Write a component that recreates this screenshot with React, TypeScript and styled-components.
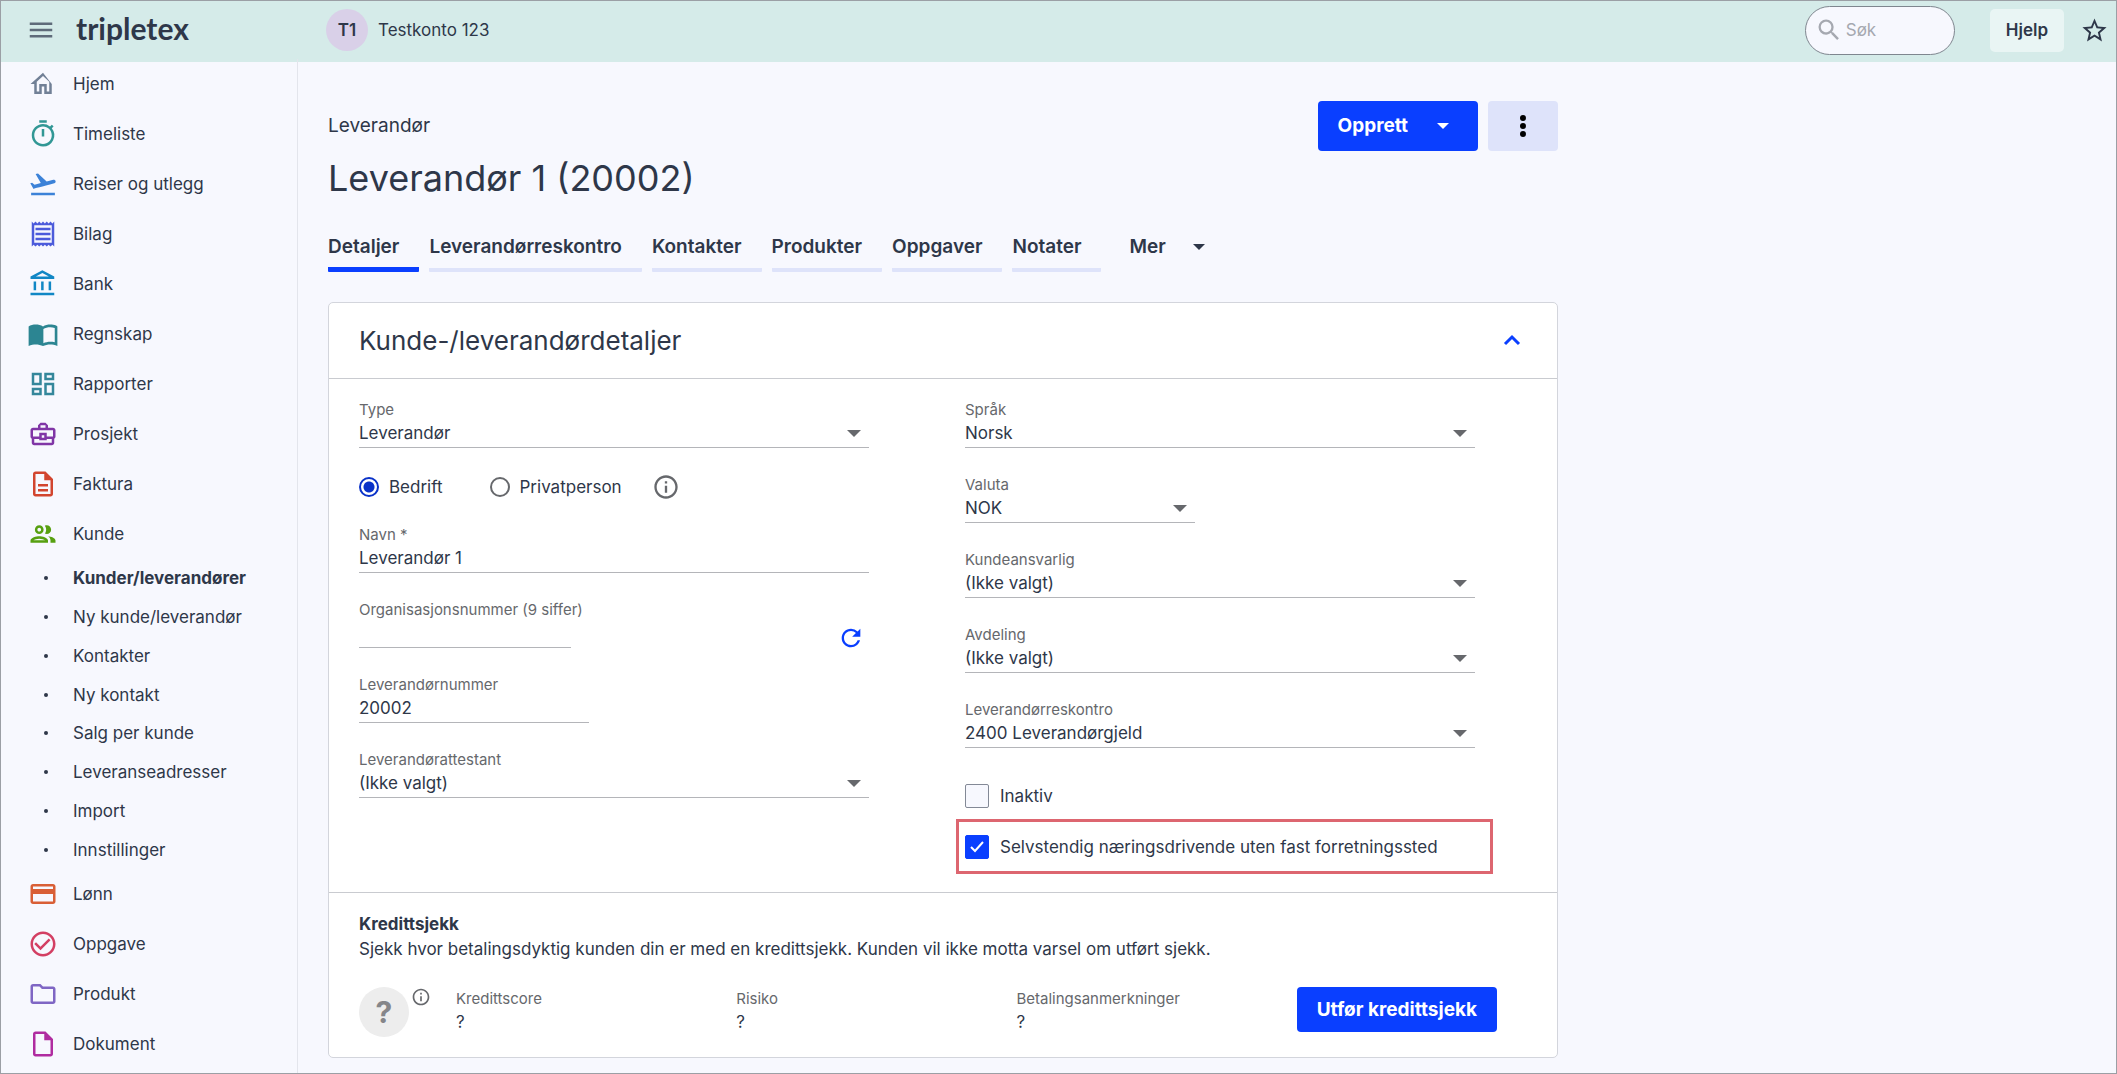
import React, { ReactNode, useId } from "react";
import styled, { createGlobalStyle } from "styled-components";
import { IconType } from "react-icons";
import {
  MdCheckCircleOutline,
  MdCreditCard,
  MdFlightTakeoff,
  MdInfoOutline,
  MdMenu,
  MdOutlineAccountBalance,
  MdOutlineBusinessCenter,
  MdOutlineDashboard,
  MdOutlineDescription,
  MdOutlineFolder,
  MdOutlineInsertDriveFile,
  MdOutlineReceipt,
  MdOutlineTimer,
  MdRefresh,
  MdSearch,
  MdStarBorder,
} from "react-icons/md";

const color = {
  ink: "#2e3749",
  muted: "#66686c",
  page: "#f7f8fe",
  header: "#d5ebe9",
  blue: "#0a3fff",
  pale: "#dee3fa",
  line: "#c9cbd0",
  rule: "#b4b5b9",
  frame: "#9b9fa5",
};

const GlobalStyle = createGlobalStyle`
  * { box-sizing: border-box; }
  body {
    margin: 0;
    background: ${color.page};
    color: ${color.ink};
    font: 400 17px/24px Inter, Roboto, "Open Sans", sans-serif;
  }
  button, input, select { font: inherit; color: inherit; margin: 0; }
  button { cursor: pointer; border: 0; background: none; padding: 0; }
  a { color: inherit; text-decoration: none; }
  svg { display: block; flex: none; }
`;

const Page = styled.div`
  display: flex;
  flex-direction: column;
  height: 100vh;
  border: 1px solid ${color.frame};
  overflow: hidden;
`;

const Header = styled.header`
  display: flex;
  align-items: center;
  flex: none;
  height: 61px;
  padding: 0 7px 3px 25px;
  background: ${color.header};
`;

const IconButton = styled.button<{ $color?: string }>`
  display: grid;
  place-items: center;
  color: ${(p) => p.$color ?? color.ink};
`;

const RefreshButton = styled(IconButton)`
  height: 24px;
`;

const Logo = styled.a`
  width: 270px;
  padding: 0 0 4px 20px;
  font: 700 30px/36px Lato, sans-serif;
`;

const Account = styled.div`
  display: flex;
  align-items: center;
  gap: 10px;
`;

const Avatar = styled.span`
  display: grid;
  place-items: center;
  width: 42px;
  height: 42px;
  border-radius: 50%;
  background: #d9d0e8;
  font-weight: 600;
`;

const Tools = styled.div`
  display: flex;
  align-items: center;
  margin-left: auto;
`;

const Search = styled.label`
  display: flex;
  align-items: center;
  gap: 3px;
  width: 150px;
  height: 49px;
  margin-right: 35px;
  padding: 0 12px 0 9px;
  border: 1px solid #7f868f;
  border-radius: 25px;
  background: ${color.page};
  color: #a5a8b0;
  input {
    width: 100%;
    min-width: 0;
    border: 0;
    padding: 0;
    outline: 0;
    background: none;
  }
  input::placeholder { color: #a5a8b0; opacity: 1; }
`;

const HelpButton = styled.button`
  height: 43px;
  margin-right: 16px;
  padding: 0 16px;
  border-radius: 5px;
  background: #e9f5f4;
  font-weight: 600;
`;

const Body = styled.div`
  display: flex;
  flex: 1;
  min-height: 0;
`;

const Sidebar = styled.nav`
  flex: none;
  width: 297px;
  border-right: 1px solid #e3e5ec;
  margin-top: -3px;
`;

const NavList = styled.ul`
  margin: 0;
  padding: 0;
  list-style: none;
`;

const NavLink = styled.a`
  display: flex;
  align-items: center;
  gap: 15px;
  height: 50px;
  padding-left: 27px;
`;

const SubList = styled(NavList)`
  display: grid;
  grid-auto-rows: 1fr;
  height: 310px;
`;

const SubLink = styled.a<{ $active?: boolean }>`
  display: flex;
  align-items: center;
  height: 100%;
  padding-left: 43px;
  font-weight: ${(p) => (p.$active ? 700 : 400)};
  &::before {
    content: "";
    width: 4px;
    height: 4px;
    margin-right: 25px;
    border-radius: 50%;
    background: ${color.ink};
  }
`;

const Main = styled.main`
  flex: 1;
  min-width: 0;
  padding: 39px 30px 0;
`;

const Content = styled.div`
  max-width: 1230px;
`;

const TitleRow = styled.div`
  display: flex;
  justify-content: space-between;
  align-items: flex-start;
`;

const Titles = styled.div`
  padding-top: 13px;
`;

const Crumb = styled.p`
  margin: 0 0 16px;
  font-size: 19px;
`;

const Title = styled.h1`
  margin: 0;
  font-size: 36px;
  font-weight: 400;
  line-height: 48px;
`;

const Actions = styled.div`
  display: flex;
  gap: 10px;
`;

const PrimaryButton = styled.button<{ $tall?: boolean }>`
  display: flex;
  align-items: center;
  gap: 29px;
  height: ${(p) => (p.$tall ? 50 : 45)}px;
  padding: 0 ${(p) => (p.$tall ? 29 : 20)}px 0 20px;
  border-radius: 4px;
  background: ${color.blue};
  color: #fff;
  font-size: 19px;
  font-weight: 700;
  white-space: nowrap;
`;

const MoreButton = styled(IconButton)`
  width: 70px;
  height: 50px;
  border-radius: 4px;
  background: ${color.pale};
  color: #000;
`;

const Tabs = styled.div`
  display: flex;
  gap: 10px;
  margin-top: 33px;
`;

const Tab = styled.button<{ $active?: boolean }>`
  height: 37px;
  padding-right: 20px;
  border-bottom: ${(p) => (p.$active ? `5px solid ${color.blue}` : `4px solid ${color.pale}`)};
  border-radius: 1px;
  padding-bottom: ${(p) => (p.$active ? 8 : 9)}px;
  font-size: 19px;
  font-weight: 600;
  text-align: left;
`;

const MoreTab = styled.button`
  display: flex;
  align-items: center;
  gap: 27px;
  height: 24px;
  margin-left: 18px;
  font-size: 19px;
  font-weight: 600;
`;

const Card = styled.section`
  margin-top: 30px;
  border: 1px solid #d3d5dc;
  border-radius: 5px;
  background: #fff;
`;

const CardHeader = styled.div`
  display: flex;
  align-items: center;
  justify-content: space-between;
  height: 76px;
  padding: 0 30px;
  border-bottom: 1px solid ${color.line};
  h2 {
    margin: 0;
    font-size: 26px;
    font-weight: 400;
    line-height: 32px;
  }
`;

const Form = styled.form`
  display: grid;
  grid-template-columns: 1fr 1fr;
  gap: 96px;
  padding: 22px 82px 34px 30px;
`;

const Column = styled.div`
  display: flex;
  flex-direction: column;
  gap: 28px;
`;

const FieldBox = styled.div<{ $width?: number }>`
  width: 100%;
  max-width: ${(p) => (p.$width ? `${p.$width}px` : "none")};
  label {
    display: block;
    margin-bottom: 1px;
    color: ${color.muted};
    font-size: 15px;
    line-height: 18px;
    white-space: nowrap;
  }
`;

const Input = styled.input`
  display: block;
  width: 100%;
  height: 28px;
  padding: 0 0 2px;
  border: 0;
  border-bottom: 1px solid ${color.rule};
  border-radius: 0;
  background: none;
  outline: 0;
`;

const SelectWrap = styled.div`
  display: grid;
  align-items: center;
  select, svg { grid-area: 1 / 1; }
  select {
    appearance: none;
    width: 100%;
    height: 28px;
    padding: 0 34px 2px 0;
    border: 0;
    border-bottom: 1px solid ${color.rule};
    border-radius: 0;
    background: none;
    outline: 0;
  }
  svg {
    justify-self: end;
    margin: 0 8px 2px 0;
    pointer-events: none;
    color: ${color.muted};
  }
`;

const OrgRow = styled.div`
  display: flex;
  justify-content: space-between;
  align-items: flex-end;
  height: 47px;
  padding-right: 4px;
`;

const Choices = styled.div`
  display: flex;
  align-items: center;
  height: 22px;
`;

const Choice = styled.label`
  display: flex;
  align-items: center;
  gap: 10px;
  margin-right: 47px;
`;

const Radio = styled.input`
  appearance: none;
  width: 20px;
  height: 20px;
  margin: 0;
  border: 2px solid #66686c;
  border-radius: 50%;
  &:checked {
    border-color: #0a32c8;
    background: radial-gradient(circle, #0a32c8 5px, transparent 6px);
  }
`;

const InfoButton = styled(IconButton)`
  margin-left: -17px;
`;

const Checks = styled.div`
  display: flex;
  flex-direction: column;
  gap: 28px;
  padding-top: 8px;
`;

const Check = styled.label<{ $marked?: boolean }>`
  position: relative;
  display: grid;
  grid-template-columns: 24px 1fr;
  column-gap: 11px;
  align-items: center;
  height: 23px;
  input, svg { grid-area: 1 / 1; }
  svg { justify-self: center; color: #fff; pointer-events: none; z-index: 1; }
  &::after {
    content: ${(p) => (p.$marked ? '""' : "none")};
    position: absolute;
    inset: -16px -18px -16px -9px;
    border: 3px solid #dd6670;
    pointer-events: none;
  }
`;

const Box = styled.input`
  appearance: none;
  width: 24px;
  height: 24px;
  border: 1px solid #838996;
  border-radius: 2px;
  background: ${color.page};
  &:checked {
    border-color: ${color.blue};
    background: ${color.blue};
  }
`;

const Credit = styled.div`
  padding: 19px 60px 20px 30px;
  border-top: 1px solid ${color.line};
  h3, p { margin: 0; font-size: 17px; line-height: 25px; }
  h3 { font-weight: 700; }
`;

const CreditRow = styled.div`
  display: flex;
  align-items: flex-start;
  margin-top: 25px;
`;

const Score = styled.span`
  display: grid;
  place-items: center;
  width: 50px;
  height: 50px;
  border-radius: 50%;
  background: #ededed;
  color: #85868a;
  font-size: 30px;
  font-weight: 700;
`;

const ScoreInfo = styled(IconButton)`
  margin: 0 25px 0 2px;
`;

const Metrics = styled.dl`
  display: grid;
  grid-template-columns: repeat(3, 1fr);
  flex: 1;
  margin: 0;
  dt { color: ${color.muted}; font-size: 15px; }
  dd { margin: 0; line-height: 22px; }
`;

const Caret = ({ size = 12 }: { size?: number }) => (
  <svg width={size} height={size / 2} viewBox="0 0 12 6" fill="currentColor" aria-hidden="true">
    <path d="M0 0h12L6 6z" />
  </svg>
);

const glyph = (d: string): IconType =>
  function Glyph({ size, color: fill }) {
    return (
      <svg width={size} height={size} viewBox="0 0 24 24" fill={fill} aria-hidden="true">
        <path d={d} />
      </svg>
    );
  };

const HouseIcon = glyph("M12 5.69l5 4.5V18h-2v-6H9v6H7v-7.81l5-4.5M12 3L2 12h3v8h6v-6h2v6h6v-8L12 3z");

const BookIcon = glyph(
  "M22.5 5.2c-1.4-.6-3.2-.8-4.7-.8-2 0-4.2.4-5.8 1.6-1.6-1.2-3.8-1.6-5.8-1.6S1.9 4.8.5 5.9v15.6c2-.9 4-1.2 5.7-1.2 2 0 4.2.4 5.8 1.3 1.6-.9 3.8-1.3 5.8-1.3 1.7 0 3.7.3 5.7 1.2V5.9c-.3-.3-.6-.5-1-.7zM21.4 18.6c-1.2-.3-2.4-.4-3.6-.4-1.9 0-4 .4-5.5 1.2V8c1.4-1 3.5-1.5 5.5-1.5 1.2 0 2.5.2 3.6.6z",
);

const PeopleIcon = glyph(
  "M9 13.75c-2.34 0-7 1.17-7 3.5V19h14v-1.75c0-2.33-4.66-3.5-7-3.5zM4.34 17c.84-.58 2.87-1.25 4.66-1.25s3.82.67 4.66 1.25H4.34zM9 12c1.93 0 3.5-1.57 3.5-3.5S10.93 5 9 5 5.5 6.57 5.5 8.5 7.07 12 9 12zm0-5c.83 0 1.5.67 1.5 1.5S9.83 10 9 10s-1.5-.67-1.5-1.5S8.17 7 9 7zm7.04 6.81c1.16.84 1.96 1.96 1.96 3.44V19h4v-1.75c0-2.02-3.5-3.17-5.96-3.44zM15 12c1.93 0 3.5-1.57 3.5-3.5S16.93 5 15 5c-.54 0-1.04.13-1.5.35.63.89 1 1.98 1 3.15s-.37 2.26-1 3.15c.46.22.96.35 1.5.35z",
);

function SelectField({ label, value, width }: { label: string; value: string; width?: number }) {
  const id = useId();
  return (
    <FieldBox $width={width}>
      <label htmlFor={id}>{label}</label>
      <SelectWrap>
        <select id={id} defaultValue={value}>
          <option>{value}</option>
        </select>
        <Caret size={14} />
      </SelectWrap>
    </FieldBox>
  );
}

function TextField({ label, value, width }: { label: string; value: string; width?: number }) {
  const id = useId();
  return (
    <FieldBox $width={width}>
      <label htmlFor={id}>{label}</label>
      <Input id={id} defaultValue={value} />
    </FieldBox>
  );
}

type Item = { label: string; icon: IconType; tint: string; children?: string[] };

const items: Item[] = [
  { label: "Hjem", icon: HouseIcon, tint: "#718096" },
  { label: "Timeliste", icon: MdOutlineTimer, tint: "#319795" },
  { label: "Reiser og utlegg", icon: MdFlightTakeoff, tint: "#3c82d8" },
  { label: "Bilag", icon: MdOutlineReceipt, tint: "#4c5bdb" },
  { label: "Bank", icon: MdOutlineAccountBalance, tint: "#1187c5" },
  { label: "Regnskap", icon: BookIcon, tint: "#2c8592" },
  { label: "Rapporter", icon: MdOutlineDashboard, tint: "#34879b" },
  { label: "Prosjekt", icon: MdOutlineBusinessCenter, tint: "#8036a6" },
  { label: "Faktura", icon: MdOutlineDescription, tint: "#d2452f" },
  {
    label: "Kunde",
    icon: PeopleIcon,
    tint: "#57a010",
    children: [
      "Kunder/leverandører",
      "Ny kunde/leverandør",
      "Kontakter",
      "Ny kontakt",
      "Salg per kunde",
      "Leveranseadresser",
      "Import",
      "Innstillinger",
    ],
  },
  { label: "Lønn", icon: MdCreditCard, tint: "#d95f36" },
  { label: "Oppgave", icon: MdCheckCircleOutline, tint: "#d33f63" },
  { label: "Produkt", icon: MdOutlineFolder, tint: "#7f66c4" },
  { label: "Dokument", icon: MdOutlineInsertDriveFile, tint: "#b02ca0" },
];

const tabs = ["Detaljer", "Leverandørreskontro", "Kontakter", "Produkter", "Oppgaver", "Notater"];

const Metric = ({ name, children }: { name: string; children: ReactNode }) => (
  <div>
    <dt>{name}</dt>
    <dd>{children}</dd>
  </div>
);

export default function App() {
  return (
    <Page>
      <GlobalStyle />
      <Header>
        <IconButton type="button" aria-label="Meny" $color="#5f6b7a">
          <MdMenu size={30} />
        </IconButton>
        <Logo href="#">tripletex</Logo>
        <Account>
          <Avatar>T1</Avatar>
          <span>Testkonto 123</span>
        </Account>
        <Tools>
          <Search>
            <MdSearch size={28} />
            <input type="search" placeholder="Søk" aria-label="Søk" />
          </Search>
          <HelpButton type="button">Hjelp</HelpButton>
          <IconButton type="button" aria-label="Favoritter">
            <MdStarBorder size={29} />
          </IconButton>
        </Tools>
      </Header>
      <Body>
        <Sidebar>
          <NavList>
            {items.map(({ label, icon: Icon, tint, children }) => (
              <li key={label}>
                <NavLink href="#">
                  <Icon size={30} color={tint} />
                  {label}
                </NavLink>
                {children && (
                  <SubList>
                    {children.map((child, i) => (
                      <li key={child}>
                        <SubLink href="#" $active={i === 0}>
                          {child}
                        </SubLink>
                      </li>
                    ))}
                  </SubList>
                )}
              </li>
            ))}
          </NavList>
        </Sidebar>
        <Main>
          <Content>
            <TitleRow>
              <Titles>
                <Crumb>Leverandør</Crumb>
                <Title>Leverandør 1 (20002)</Title>
              </Titles>
              <Actions>
                <PrimaryButton type="button" $tall>
                  Opprett
                  <Caret />
                </PrimaryButton>
                <MoreButton type="button" aria-label="Flere valg">
                  <svg width="6" height="22" viewBox="0 0 6 22" aria-hidden="true">
                    <circle cx="3" cy="3" r="3" />
                    <circle cx="3" cy="11" r="3" />
                    <circle cx="3" cy="19" r="3" />
                  </svg>
                </MoreButton>
              </Actions>
            </TitleRow>
            <Tabs>
              {tabs.map((tab, i) => (
                <Tab key={tab} type="button" $active={i === 0}>
                  {tab}
                </Tab>
              ))}
              <MoreTab type="button">
                Mer
                <Caret />
              </MoreTab>
            </Tabs>
            <Card>
              <CardHeader>
                <h2>Kunde-/leverandørdetaljer</h2>
                <IconButton type="button" aria-label="Skjul detaljer" $color={color.blue}>
                  <svg width="30" height="30" viewBox="0 0 30 30" fill="none" aria-hidden="true">
                    <path d="M8 18l7-7 7 7" stroke="currentColor" strokeWidth="3" />
                  </svg>
                </IconButton>
              </CardHeader>
              <Form>
                <Column>
                  <SelectField label="Type" value="Leverandør" />
                  <Choices>
                    <Choice>
                      <Radio type="radio" name="kind" defaultChecked />
                      Bedrift
                    </Choice>
                    <Choice>
                      <Radio type="radio" name="kind" />
                      Privatperson
                    </Choice>
                    <InfoButton type="button" aria-label="Informasjon" $color={color.muted}>
                      <MdInfoOutline size={28} />
                    </InfoButton>
                  </Choices>
                  <TextField label="Navn *" value="Leverandør 1" />
                  <OrgRow>
                    <TextField label="Organisasjonsnummer (9 siffer)" value="" width={212} />
                    <RefreshButton type="button" aria-label="Oppdater" $color={color.blue}>
                      <MdRefresh size={28} />
                    </RefreshButton>
                  </OrgRow>
                  <TextField label="Leverandørnummer" value="20002" width={230} />
                  <SelectField label="Leverandørattestant" value="(Ikke valgt)" />
                </Column>
                <Column>
                  <SelectField label="Språk" value="Norsk" />
                  <SelectField label="Valuta" value="NOK" width={230} />
                  <SelectField label="Kundeansvarlig" value="(Ikke valgt)" />
                  <SelectField label="Avdeling" value="(Ikke valgt)" />
                  <SelectField label="Leverandørreskontro" value="2400 Leverandørgjeld" />
                  <Checks>
                    <Check>
                      <Box type="checkbox" />
                      Inaktiv
                    </Check>
                    <Check $marked>
                      <Box type="checkbox" defaultChecked />
                      <svg width="14" height="12" viewBox="0 0 14 12" fill="none" aria-hidden="true">
                        <path d="M1 6l4 4 8-9" stroke="currentColor" strokeWidth="2" />
                      </svg>
                      Selvstendig næringsdrivende uten fast forretningssted
                    </Check>
                  </Checks>
                </Column>
              </Form>
              <Credit>
                <h3>Kredittsjekk</h3>
                <p>
                  Sjekk hvor betalingsdyktig kunden din er med en kredittsjekk. Kunden vil ikke motta varsel om
                  utført sjekk.
                </p>
                <CreditRow>
                  <Score>?</Score>
                  <ScoreInfo type="button" aria-label="Om kredittscore" $color={color.muted}>
                    <MdInfoOutline size={20} />
                  </ScoreInfo>
                  <Metrics>
                    <Metric name="Kredittscore">?</Metric>
                    <Metric name="Risiko">?</Metric>
                    <Metric name="Betalingsanmerkninger">?</Metric>
                  </Metrics>
                  <PrimaryButton type="button">Utfør kredittsjekk</PrimaryButton>
                </CreditRow>
              </Credit>
            </Card>
          </Content>
        </Main>
      </Body>
    </Page>
  );
}
